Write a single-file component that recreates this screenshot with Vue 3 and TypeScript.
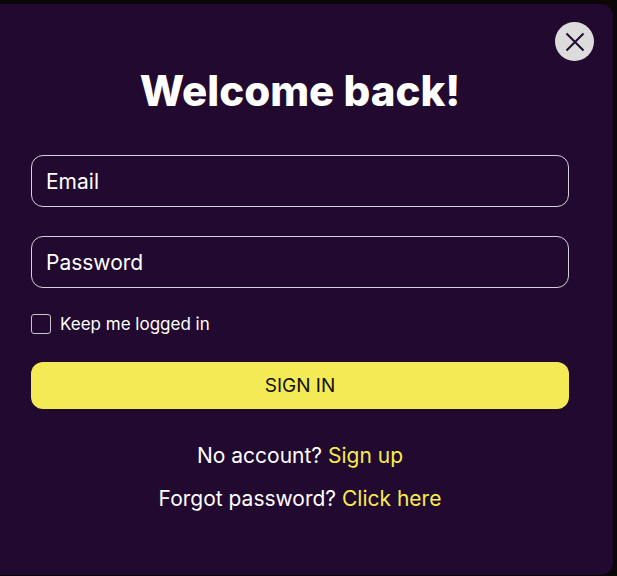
<script setup lang="ts">
const email = ''
const password = ''
</script>

<template>
  <main class="backdrop">
    <section class="dialog">
      <button class="close" type="button" aria-label="Close">
        <svg viewBox="0 0 24 24" width="24" height="24" aria-hidden="true">
          <path d="M3.5 3.5 20.500 20.500M20.500 3.500 3.500 20.500" />
        </svg>
      </button>
      <h1 class="title">Welcome back!</h1>
      <form class="form" @submit.prevent>
        <input class="field" type="email" placeholder="Email" :value="email" />
        <input class="field" type="password" placeholder="Password" :value="password" />
        <label class="keep">
          <span class="box"></span>
          <span>Keep me logged in</span>
        </label>
        <button class="submit" type="submit">SIGN IN</button>
      </form>
      <p class="line first">No account? <a href="#">Sign up</a></p>
      <p class="line">Forgot password? <a href="#">Click here</a></p>
    </section>
  </main>
</template>

<style>
html, body { margin: 0; background: #0b0709; }
</style>

<style scoped>
.backdrop {
  width: 617px;
  height: 576px;
  padding-top: 4px;
  box-sizing: border-box;
  background: #0b0709;
  overflow: hidden;
  font-family: Inter, "Noto Sans", sans-serif;
}
.dialog {
  position: relative;
  width: 613px;
  height: 571px;
  box-sizing: border-box;
  padding: 63px 44px 0 31px;
  background: #22092f;
  border-radius: 0 12px 12px 0;
  color: #fff;
}
.close {
  position: absolute;
  top: 18px;
  right: 19px;
  width: 39px;
  height: 39px;
  padding: 0;
  border: 0;
  border-radius: 50%;
  background: #dcdcdc;
  display: flex;
  align-items: center;
  justify-content: center;
}
.close path {
  fill: none;
  stroke: #22092f;
  stroke-width: 2;
}
.title {
  margin: 0;
  font-size: 42px;
  line-height: 48px;
  font-weight: 800;
  text-align: center;
}
.form {
  margin-top: 40px;
  display: flex;
  flex-direction: column;
}
.field {
  height: 52px;
  box-sizing: border-box;
  margin-bottom: 29px;
  padding: 0 14px;
  border: 1px solid #d5cfd8;
  border-radius: 12px;
  background: transparent;
  color: #fff;
  font: 400 21px Inter, "Noto Sans", sans-serif;
}
.field::placeholder {
  color: #fff;
  opacity: 1;
}
.keep {
  display: flex;
  align-items: center;
  gap: 9px;
  height: 20px;
  margin-top: -3px;
  font-size: 17px;
}
.box {
  width: 18px;
  height: 18px;
  border: 1px solid #c9c3cc;
  border-radius: 3px;
}
.submit {
  height: 47px;
  margin-top: 28px;
  border: 0;
  border-radius: 12px;
  background: #f4ea55;
  color: #111;
  font: 400 19px Inter, "Noto Sans", sans-serif;
}
.line {
  margin: 14px 0 0;
  line-height: 29px;
  font-size: 21px;
  text-align: center;
}
.first {
  margin-top: 32px;
}
.line a {
  color: #f6ec50;
  text-decoration: none;
}
</style>
